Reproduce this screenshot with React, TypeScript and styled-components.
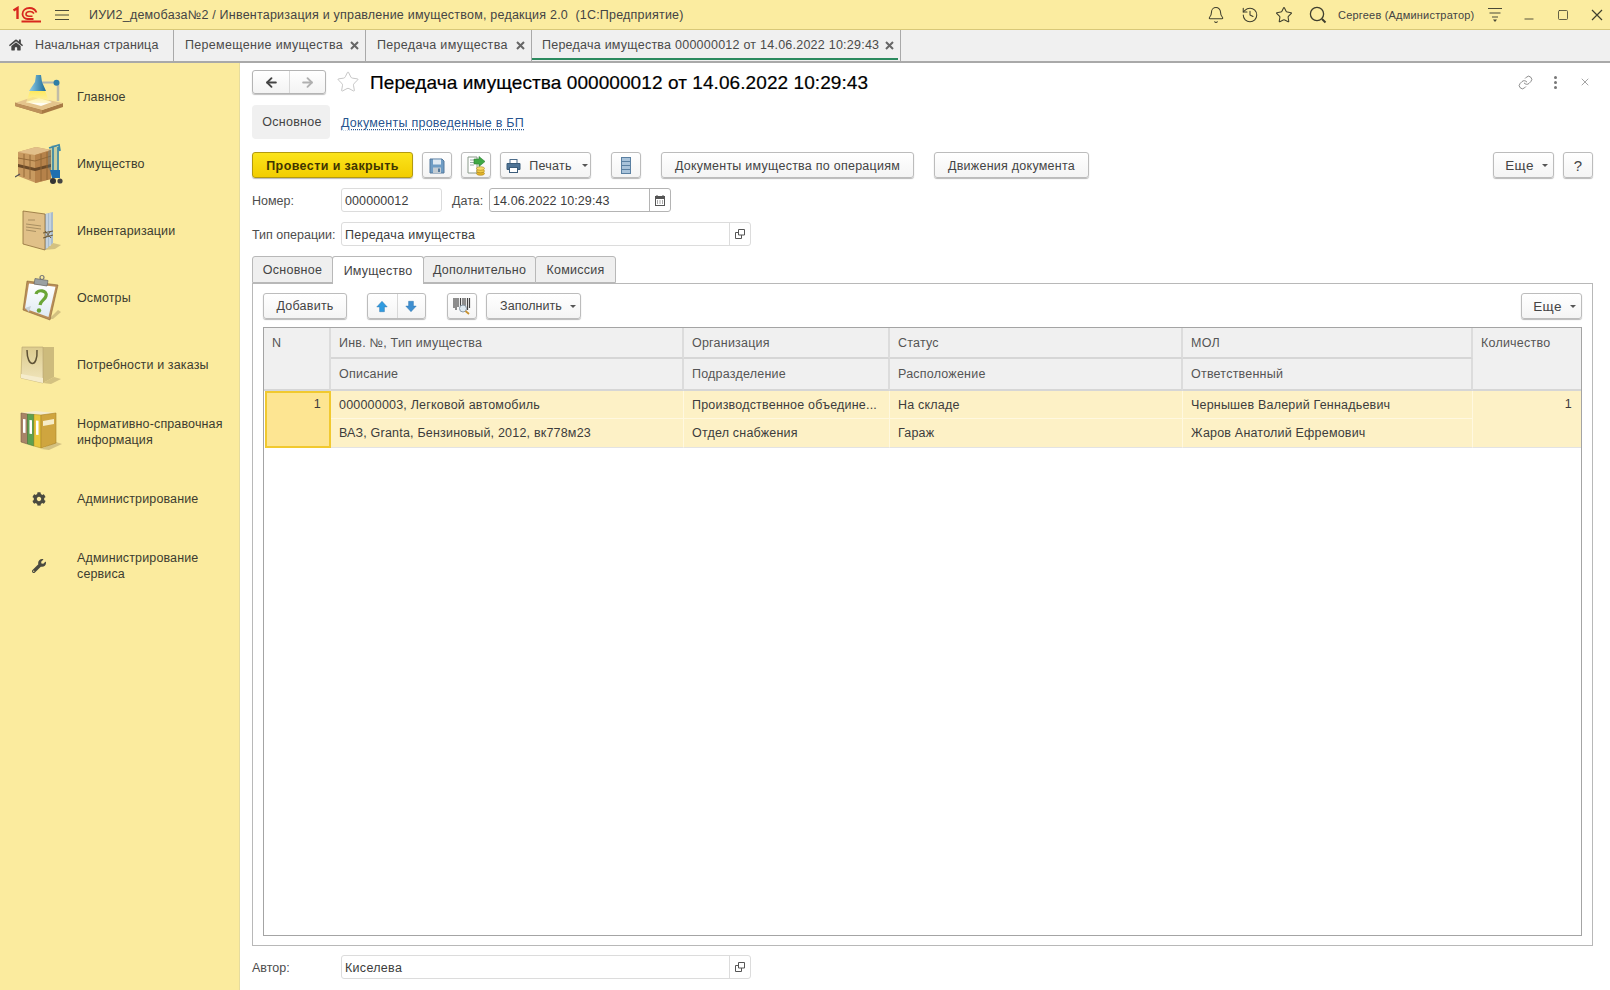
import styled, { createGlobalStyle } from 'styled-components';
import { ReactNode } from 'react';
import { Bell, History, Star, Minus, Square, X, Link, ArrowLeft, ArrowRight } from 'lucide-react';
import { FaHome, FaCog, FaWrench } from 'react-icons/fa';

const GlobalStyle = createGlobalStyle`
  html, body { margin: 0; padding: 0; height: 100%; overflow: hidden; background: #fff; }
  body { font-family: "Liberation Sans", Arial, sans-serif; font-size: 13px; color: #3c3c3c; }
  * { box-sizing: border-box; }
`;

const Page = styled.div`
  width: 1610px;
  height: 990px;
  display: flex;
  flex-direction: column;
  overflow: hidden;
`;

/* ---------- title bar ---------- */
const TitleBar = styled.header`
  height: 30px;
  flex: none;
  display: flex;
  align-items: center;
  background: #fbeca0;
  border-bottom: 1px solid #d8c878;
`;

const LogoBox = styled.div`
  width: 45px;
  padding-left: 12px;
  display: flex;
  align-items: center;
`;

const Burger = styled.div`
  width: 34px;
  display: flex;
  justify-content: center;
`;

const AppTitle = styled.div`
  flex: 1;
  padding-left: 10px;
  font-size: 12.5px;
  color: #444;
  letter-spacing: 0.215px;
  white-space: pre;
`;

const BarIcon = styled.div`
  width: 34px;
  height: 29px;
  display: flex;
  align-items: center;
  justify-content: center;
  color: #3f3f2e;
`;

const CloseWin = styled(BarIcon)`
  width: 26px;
  margin-left: 4px;
`;

const UserName = styled.div`
  font-size: 11px;
  color: #444;
  width: 143px;
  padding-left: 3px;
  letter-spacing: 0.2px;
  white-space: nowrap;
`;

/* ---------- open windows ---------- */
const TabStrip = styled.nav`
  height: 33px;
  flex: none;
  display: flex;
  background: #f0f0f0;
  border-bottom: 2px solid #a9a9a9;
`;

const WinTab = styled.div<{ $width: number; $active?: boolean }>`
  width: ${(p) => p.$width}px;
  flex: none;
  display: flex;
  align-items: center;
  justify-content: space-between;
  padding: 0 6px 1px 11px;
  border-right: 1px solid #a9a9a9;
  font-size: 12.5px;
  letter-spacing: 0.32px;
  color: #4a4a4a;
  white-space: nowrap;
  position: relative;
  ${(p) =>
    p.$active &&
    `
    padding-left: 10px;
    padding-right: 6px;
    letter-spacing: 0.24px;
    &::after {
      content: '';
      position: absolute;
      left: 0;
      right: 2px;
      bottom: 1px;
      height: 2px;
      background: #2b8a5e;
    }
  `}
`;

const HomeTab = styled(WinTab)`
  justify-content: flex-start;
  gap: 12px;
  padding-left: 9px;
  letter-spacing: 0.14px;
`;

const TabClose = () => (
  <svg width="9" height="9" viewBox="0 0 9 9">
    <path d="M1 1l7 7M8 1l-7 7" stroke="#666" strokeWidth="2" />
  </svg>
);

/* ---------- body ---------- */
const Body = styled.div`
  flex: 1;
  min-height: 0;
  display: flex;
`;

const Sidebar = styled.aside`
  width: 240px;
  flex: none;
  background: #fbeb9e;
  border-right: 1px solid #e6dc9e;
`;

const NavItem = styled.div`
  height: 67px;
  display: grid;
  grid-template-columns: 77px 1fr;
  align-items: center;
  font-size: 12.5px;
  line-height: 16px;
  letter-spacing: 0.13px;
  color: #3c3c30;
`;

const NavIcon = styled.div`
  display: flex;
  justify-content: center;
  padding-left: 1px;
  color: #4a4a40;
`;

const Content = styled.main`
  flex: 1;
  min-width: 0;
  display: flex;
  flex-direction: column;
  padding: 7px 17px 0 12px;
`;

const DocHeader = styled.div`
  height: 24px;
  display: flex;
  align-items: center;
`;

const NavGroup = styled.div`
  width: 74px;
  height: 24px;
  display: grid;
  grid-template-columns: 1fr 1fr;
  border: 1px solid #b4b4b4;
  border-radius: 3px;
  background: linear-gradient(#fff, #f3f3f3);
  box-shadow: 0 1px 1px rgba(0, 0, 0, 0.25);
  & > div {
    display: flex;
    align-items: center;
    justify-content: center;
  }
  & > div + div {
    border-left: 1px solid #d8d8d8;
  }
`;

const DocTitle = styled.h1`
  margin: 1px 0 0 10px;
  flex: 1;
  font-size: 19px;
  font-weight: 400;
  color: #000;
  letter-spacing: 0.08px;
  white-space: nowrap;
  -webkit-text-stroke: 0.2px #000;
`;

const HeaderTools = styled.div`
  display: flex;
  align-items: center;
  margin-right: -7px;
`;

const HeaderTool = styled.div`
  width: 30px;
  display: flex;
  justify-content: center;
  color: #666;
`;

const Dots = styled.div`
  display: flex;
  flex-direction: column;
  gap: 2px;
  & > i {
    width: 3px;
    height: 3px;
    border-radius: 50%;
    background: #777;
  }
`;

const SectionTabs = styled.div`
  margin-top: 11px;
  height: 34px;
  display: flex;
  align-items: center;
`;

const SectionCurrent = styled.div`
  width: 78px;
  height: 34px;
  padding-left: 2px;
  line-height: 35px;
  text-align: center;
  background: #f0f0f0;
  border-radius: 4px;
  letter-spacing: 0.3px;
  font-size: 12.5px;
  color: #444;
`;

const SectionLink = styled.a`
  margin: 1px 0 0 11px;
  color: #27548f;
  font-size: 12.5px;
  letter-spacing: 0.25px;
  text-decoration: underline;
  text-decoration-style: dotted;
  text-underline-offset: 2px;
`;

const CommandBar = styled.div<{ $top?: number }>`
  margin-top: ${(p) => p.$top ?? 13}px;
  height: 26px;
  display: flex;
  align-items: stretch;
`;

const PanelBar = styled(CommandBar)`
  & > div {
    padding-top: 0;
  }
`;

const Spring = styled.div`
  flex: 1;
`;

const Btn = styled.div<{ $width: number; $left?: number; $primary?: boolean; $gap?: number }>`
  width: ${(p) => p.$width}px;
  margin-left: ${(p) => p.$left ?? 0}px;
  flex: none;
  display: flex;
  align-items: center;
  justify-content: center;
  gap: ${(p) => p.$gap ?? 6}px;
  padding-top: 1px;
  border: 1px solid ${(p) => (p.$primary ? '#b39a10' : '#bcbcbc')};
  border-radius: 3px;
  background: ${(p) => (p.$primary ? 'linear-gradient(#fbe41c, #f2cd00)' : 'linear-gradient(#fff, #f4f4f4)')};
  box-shadow: 0 1px 1px rgba(0, 0, 0, 0.28);
  font-size: 12.5px;
  letter-spacing: ${(p) => (p.$primary ? 0.4 : 0.25)}px;
  font-weight: ${(p) => (p.$primary ? 700 : 400)};
  color: ${(p) => (p.$primary ? '#3f3500' : '#444')};
  white-space: nowrap;
`;

const PrintBtn = styled(Btn)`
  padding-left: 3px;
`;

const MoreBtn = styled(Btn)`
  padding-left: 6px;
  font-size: 13.5px;
  letter-spacing: 0.4px;
`;

const FillBtn = styled(Btn)`
  padding-left: 9px;
  letter-spacing: 0.05px;
`;

const HelpBtn = styled(Btn)`
  font-size: 15px;
  padding-top: 0;
`;

const Caret = styled.i`
  width: 0;
  height: 0;
  margin-left: 2px;
  border-left: 3px solid transparent;
  border-right: 3px solid transparent;
  border-top: 3px solid #555;
`;

const SplitBtn = styled(Btn)`
  display: grid;
  grid-template-columns: 1fr 1fr;
  gap: 0;
  & > div {
    display: flex;
    align-items: center;
    justify-content: center;
    height: 100%;
  }
  & > div + div {
    border-left: 1px solid #d8d8d8;
  }
`;

const FieldRow = styled.div<{ $top: number }>`
  margin-top: ${(p) => p.$top}px;
  height: 24px;
  display: flex;
  align-items: center;
`;

const Label = styled.label<{ $width?: number; $left?: number }>`
  width: ${(p) => p.$width ?? 89}px;
  margin-left: ${(p) => p.$left ?? 0}px;
  padding-top: 1px;
  flex: none;
  font-size: 12.5px;
  color: #4d4d4d;
  white-space: nowrap;
`;

const Field = styled.div<{ $width: number; $strong?: boolean }>`
  width: ${(p) => p.$width}px;
  height: 24px;
  flex: none;
  display: flex;
  align-items: center;
  border: 1px solid ${(p) => (p.$strong ? '#b4b4b4' : '#dcdcdc')};
  border-radius: 3px;
  background: #fff;
  font-size: 12.5px;
  color: #3c3c3c;
`;

const FieldValue = styled.span<{ $digits?: boolean }>`
  flex: 1;
  padding: 1px 0 0 3px;
  letter-spacing: ${(p) => (p.$digits ? 0.1 : 0.3)}px;
`;

const FieldBtn = styled.span<{ $strong?: boolean }>`
  width: 21px;
  height: 100%;
  display: flex;
  align-items: center;
  justify-content: center;
  border-left: 1px solid ${(p) => (p.$strong ? '#b4b4b4' : '#dcdcdc')};
`;

const PageTabs = styled.div`
  margin-top: 10px;
  height: 27px;
  display: flex;
`;

const PageTab = styled.div<{ $width: number; $active?: boolean }>`
  width: ${(p) => p.$width}px;
  height: ${(p) => (p.$active ? 28 : 27)}px;
  display: flex;
  align-items: center;
  justify-content: center;
  position: relative;
  z-index: ${(p) => (p.$active ? 1 : 0)};
  margin-right: -1px;
  border: 1px solid #b8b8b8;
  border-bottom: ${(p) => (p.$active ? 'none' : '1px solid #b8b8b8')};
  border-radius: 3px 3px 0 0;
  background: ${(p) => (p.$active ? '#fff' : '#efefef')};
  font-size: 12.5px;
  letter-spacing: 0.25px;
  color: #444;
`;

const Panel = styled.section`
  height: 663px;
  display: flex;
  flex-direction: column;
  border: 1px solid #b8b8b8;
  padding: 0 10px;
`;

const Grid = styled.div`
  margin-top: 8px;
  height: 609px;
  border: 1px solid #a4a4a4;
  display: grid;
  grid-template-columns: 67px 353px 206px 293px 290px 1fr;
  grid-template-rows: 31px 32px 28px 29px 1fr;
  align-content: start;
`;

const HeadCell = styled.div<{ $tall?: boolean; $last?: boolean }>`
  grid-row: ${(p) => (p.$tall ? 'span 2' : 'auto')};
  padding: ${(p) => (p.$tall ? '8px' : '0')} 9px 0 8px;
  display: flex;
  align-items: ${(p) => (p.$tall ? 'flex-start' : 'center')};
  background: #f0f0f0;
  border-right: ${(p) => (p.$last ? 'none' : '2px solid #dcdcdc')};
  border-bottom: 2px solid #d6d6d6;
  font-size: 12.5px;
  letter-spacing: 0.22px;
  color: #555;
  white-space: nowrap;
`;

const RowCell = styled.div<{ $tall?: boolean; $last?: boolean; $bottom?: boolean; $right?: boolean }>`
  grid-row: ${(p) => (p.$tall ? 'span 2' : 'auto')};
  padding: ${(p) => (p.$tall ? '6px' : '0')} 9px 0 8px;
  display: flex;
  align-items: ${(p) => (p.$tall ? 'flex-start' : 'center')};
  justify-content: ${(p) => (p.$right ? 'flex-end' : 'flex-start')};
  background: #fdf1c6;
  border-right: ${(p) => (p.$last ? 'none' : '1px solid #fff8e0')};
  border-bottom: 1px solid ${(p) => (p.$bottom || p.$tall ? '#e3e3e3' : '#fff8e0')};
  font-size: 12.5px;
  letter-spacing: 0.2px;
  color: #3c3c3c;
  white-space: nowrap;
  overflow: hidden;
`;

const ActiveCell = styled(RowCell)`
  background: #fde592;
  border: 2px solid #f1c92f;
  padding: 4px 8px 0;
  margin-left: 1px;
`;

const Empty = styled.div`
  grid-column: 1 / -1;
  background: #fff;
`;

/* ---------- icons ---------- */
const Logo = () => (
  <svg width="30" height="17" viewBox="0 0 29 17" fill="none" stroke="#d8281e">
    <path d="M1 4.5 L5 2 V13" strokeWidth="2.4" />
    <path d="M24 6.5 C22.5 3 19.5 2 17 2 C13 2 10 4.5 10 8 C10 11 12.5 13 15 13 H21" strokeWidth="1.8" />
    <path d="M21.5 7.5 C20.5 6 19 5.5 17.5 5.5 C15 5.5 13.5 6.8 13.5 8.3 C13.5 9.5 15 10.2 16.5 10.2 H20" strokeWidth="1.6" />
    <path d="M9 15.5 H28.5" strokeWidth="2" />
  </svg>
);

const BurgerIcon = () => (
  <svg width="14" height="12" viewBox="0 0 14 12" stroke="#4a4a38" strokeWidth="1.2">
    <path d="M0 1.5H14M0 6H14M0 10.5H14" />
  </svg>
);

const SearchIcon = () => (
  <svg width="18" height="18" viewBox="0 0 18 18" fill="none" stroke="#3f3f2e" strokeWidth="1.3">
    <circle cx="8" cy="8" r="6.6" />
    <path d="M13 13L16.5 16.5" strokeWidth="2" />
  </svg>
);

const FilterIcon = () => (
  <svg width="16" height="15" viewBox="0 0 16 15" stroke="#4a4a38" strokeWidth="1.2">
    <path d="M1 1.5H15M2.5 6H13.5M5 10H11" />
    <path d="M6 12.5H10L8 15Z" fill="#4a4a38" stroke="none" />
  </svg>
);

const WinCloseIcon = () => (
  <svg width="12" height="12" viewBox="0 0 12 12" stroke="#3f3f2e" strokeWidth="1.2">
    <path d="M1 1L11 11M11 1L1 11" />
  </svg>
);

const OpenIcon = () => (
  <svg width="10" height="10" viewBox="0 0 10 10" fill="none" stroke="#555">
    <path d="M3.5 0.5H9.5V6H3.5Z" />
    <path d="M3.5 3.5H0.5V9.5H6.5V6" />
  </svg>
);

const CalendarIcon = () => (
  <svg width="10" height="11" viewBox="0 0 10 11">
    <rect x="0.5" y="1.5" width="9" height="9" fill="#fff" stroke="#555" />
    <rect x="0.5" y="1.5" width="9" height="2.5" fill="#555" />
    <path d="M2 0V2M8 0V2" stroke="#555" />
    <path d="M2 6H3M4.5 6H5.5M7 6H8M2 8H3M4.5 8H5.5M7 8H8" stroke="#555" />
  </svg>
);

const SaveIcon = () => (
  <svg width="16" height="16" viewBox="0 0 16 16">
    <path d="M1 1H13L15 3V15H1Z" fill="#6e9cc4" stroke="#55799c" />
    <rect x="4" y="1.5" width="8" height="5" fill="#dfe9f2" />
    <rect x="4" y="9.5" width="8" height="5.5" fill="#c3ccd3" />
    <rect x="9" y="10.5" width="2" height="3.5" fill="#55799c" />
  </svg>
);

const PostIcon = () => (
  <svg width="20" height="20" viewBox="0 0 20 20">
    <path d="M2 1H11V17H2Z" fill="#fff" stroke="#8a9a8a" />
    <path d="M4 4H9M4 6.5H9M4 9H8" stroke="#9aa" />
    <path d="M8 3H13V0.5L19 5.5 13 10.5V8H8Z" fill="#3fa945" stroke="#2b7c31" strokeWidth="0.6" />
    <ellipse cx="14.5" cy="17.5" rx="4" ry="1.8" fill="#e3b52c" stroke="#a97f13" strokeWidth="0.6" />
    <ellipse cx="14.5" cy="15" rx="4" ry="1.8" fill="#f0cb48" stroke="#a97f13" strokeWidth="0.6" />
    <ellipse cx="14.5" cy="12.5" rx="4" ry="1.8" fill="#f7dc6b" stroke="#a97f13" strokeWidth="0.6" />
  </svg>
);

const PrintIcon = () => (
  <svg width="15" height="14" viewBox="0 0 15 14">
    <rect x="4" y="0.5" width="7" height="4" fill="#fff" stroke="#4d6d8b" />
    <path d="M1 4.5H14V10.5H1Z" fill="#4f7496" stroke="#3b5c7a" />
    <rect x="3.5" y="8.5" width="8" height="5" fill="#fff" stroke="#3b5c7a" />
  </svg>
);

const ListIcon = () => (
  <svg width="10" height="17" viewBox="0 0 10 17">
    <rect x="0.5" y="0.5" width="9" height="16" fill="#a9c3da" stroke="#5a80a2" />
    <path d="M0.5 4.5H9.5M0.5 8.5H9.5M0.5 12.5H9.5" stroke="#5a80a2" />
  </svg>
);

const BlueArrow = ({ down }: { down?: boolean }) => (
  <svg width="12" height="13" viewBox="0 0 15 15" style={down ? { transform: 'scaleY(-1)' } : undefined}>
    <path d="M7.5 1 L14 8 H10.5 V14 H4.5 V8 H1 Z" fill={down ? '#3f8fd0' : '#2f9be0'} stroke="#2a74ae" strokeWidth="0.6" />
  </svg>
);

const BarcodeIcon = () => (
  <svg width="18" height="18" viewBox="0 0 18 18">
    <path d="M1 1V11M3 1V13M5 1V10M7.5 1V9M10 1V9M12 1V10M14.5 1V13M16.5 1V11" stroke="#444" strokeWidth="1.2" />
    <circle cx="10" cy="11.5" r="3.5" fill="#dfeaf2" stroke="#8a9aa6" />
    <path d="M12.5 14L16 17" stroke="#c8912e" strokeWidth="1.8" />
  </svg>
);

const LampIcon = () => (
  <svg width="48" height="48" viewBox="0 0 48 48">
    <defs>
      <linearGradient id="lampCone" x1="0" y1="0" x2="0" y2="1">
        <stop offset="0" stopColor="#ffe95a" />
        <stop offset="1" stopColor="#fff2a8" stopOpacity="0.5" />
      </linearGradient>
      <linearGradient id="lampShade" x1="0" y1="0" x2="1" y2="0">
        <stop offset="0" stopColor="#8fcde8" />
        <stop offset="1" stopColor="#1c6a96" />
      </linearGradient>
    </defs>
    <path d="M0 33 L27 41 L48 34 V30 L27 37 L0 29.5Z" fill="#a87a45" />
    <path d="M0 30 L18 24 L48 30 L27 37Z" fill="#e4c48c" />
    <path d="M0 33 L27 41 L27 37 L0 30Z" fill="#bd915b" />
    <path d="M11 29 L24 25 L37 29 L26 33Z" fill="#fffdf2" />
    <path d="M15 18 H30 L35 30 H11Z" fill="url(#lampCone)" />
    <path d="M43 10 V28" stroke="#c0bca8" strokeWidth="2.5" />
    <path d="M26 9.5 H41" stroke="#aeb5b0" strokeWidth="2" />
    <circle cx="41.5" cy="9.7" r="3" fill="#2f7ea6" />
    <path d="M21 2 H26 L27 9 L31 18 L14 18 L20 9Z" fill="url(#lampShade)" />
  </svg>
);

const CratesIcon = () => (
  <svg width="48" height="48" viewBox="0 0 48 48">
    <path d="M3 12 L21 7 L36 10 L36 39 L21 43 L3 36Z" fill="#c89a60" />
    <path d="M3 12 L21 7 L36 10 L20 15Z" fill="#e2bf8a" />
    <path d="M20 15 L36 10 V39 L20 43Z" fill="#b6824a" />
    <path d="M3 24 L20 28 L36 24 V27 L20 31 L3 27Z" fill="#6a4a28" />
    <path d="M9 14 V37 M15 15 V39 M26 14 V41 M32 12 V40 M3 18 L20 21 L36 16" stroke="#8f6534" strokeWidth="0.9" fill="none" />
    <path d="M33 12 V28 L39 36 H44 L42 26 V5 H37 Z" fill="#2c78a8" opacity="0.25" />
    <path d="M34 8 L44 5 L45 11 M38 7 V30 M43 7 V31" stroke="#3f8aa6" strokeWidth="1.8" fill="none" />
    <path d="M35 30 H45 L45 38 H37 Z" fill="#1e6fb0" />
    <circle cx="38" cy="41" r="3" fill="#333" />
    <circle cx="45" cy="41" r="2.6" fill="#444" />
    <path d="M0 37 L5 34" stroke="#555" strokeWidth="1.4" />
  </svg>
);

const FolderIcon = () => (
  <svg width="48" height="48" viewBox="0 0 48 48">
    <path d="M28 43 L38 36 L46 38 L40 42Z" fill="#c9b779" opacity="0.8" />
    <path d="M30 7 L38 5 V36 L30 43Z" fill="#a9bccd" />
    <path d="M32 6.5 V41 M35 6 V39" stroke="#dfe8ef" />
    <path d="M8 4 L30 7 V43 L8 37Z" fill="#e0c088" stroke="#8e6d3a" strokeWidth="0.8" />
    <path d="M13 13 H20 M11 17 L26 19 M11 20 L26 22 M11 23 L21 24.5" stroke="#8f7a50" strokeWidth="0.7" />
    <path d="M28 26 L38 24 M28 31 L38 28 M30 24 L36 31 M36 24 L30 31" stroke="#6d5a38" strokeWidth="1" />
  </svg>
);

const ClipboardIcon = () => (
  <svg width="48" height="48" viewBox="0 0 48 48">
    <path d="M34 45 L43 36 L46 38 L38 45Z" fill="#c9b779" opacity="0.8" />
    <defs>
      <linearGradient id="clipPaper" x1="0" y1="0" x2="0" y2="1">
        <stop offset="0" stopColor="#ffffff" />
        <stop offset="1" stopColor="#dfeaf3" />
      </linearGradient>
    </defs>
    <path d="M12 7 L43 11 L35 46 L8 36Z" fill="#b98d58" stroke="#8a6436" strokeWidth="0.6" />
    <path d="M14 9.5 L40.5 12.8 L33.5 43 L14 36 L10 34Z" fill="url(#clipPaper)" />
    <path d="M10 34 L14 38 L16 32Z" fill="#c7d0d6" />
    <path d="M20 4.5 L33 6.5 L32 12 L19 10Z" fill="#9aa0a2" stroke="#666" strokeWidth="0.7" />
    <circle cx="27" cy="3.5" r="2" fill="none" stroke="#777" strokeWidth="1.2" />
    <path d="M21 20 C22 15 33 16 31 22 C30 26 26 26 25 31" fill="none" stroke="#6aa536" strokeWidth="3.2" />
    <circle cx="24" cy="36.5" r="2.2" fill="#6aa536" />
  </svg>
);

const BagIcon = () => (
  <svg width="48" height="48" viewBox="0 0 48 48">
    <defs>
      <linearGradient id="bagFront" x1="0" y1="0" x2="0" y2="1">
        <stop offset="0" stopColor="#dccb8e" />
        <stop offset="1" stopColor="#f1e6bd" />
      </linearGradient>
    </defs>
    <path d="M28 42 L39 36 L46 38 L36 43Z" fill="#c9b779" opacity="0.8" />
    <path d="M28 6 L39 6 V36 L28 42Z" fill="#cdbb7c" />
    <path d="M7 6 H28 V42 L6 37Z" fill="url(#bagFront)" stroke="#b6a370" strokeWidth="0.6" />
    <path d="M6 33 L28 37 V42 L6 37Z" fill="#f5eccc" />
    <path d="M12 9 C12 27 23 27 22 9" fill="none" stroke="#5e5236" strokeWidth="1.5" />
  </svg>
);

const BindersIcon = () => (
  <svg width="48" height="48" viewBox="0 0 48 48">
    <path d="M26 41 L41 34 L47 36 L34 42Z" fill="#c9b779" opacity="0.8" />
    <path d="M6 5 L20 3 L41 5 L26 7Z" fill="#f4eccf" />
    <path d="M6 5 L12.5 6 V36 L6 34Z" fill="#a88468" stroke="#7b5c44" strokeWidth="0.6" />
    <path d="M12.5 6 L19 6.5 V38 L12.5 36Z" fill="#5fa04f" stroke="#44773a" strokeWidth="0.6" />
    <path d="M19 6.5 L26 7 V40 L19 38Z" fill="#e8c63c" stroke="#b8962a" strokeWidth="0.6" />
    <path d="M26 7 L41 5 V35 L26 40Z" fill="#cfa53f" stroke="#a98328" strokeWidth="0.6" />
    <path d="M28 13 L39 11 V16 L28 18Z" fill="#f6ecc7" />
    <path d="M8 11 L10.5 11.3 V25 L8 24.7Z M14.5 12 L17 12.3 V26 L14.5 25.7Z M21 12.5 L23.5 12.8 V27 L21 26.7Z" fill="#fff" />
  </svg>
);

const navItems: { title: ReactNode; icon: ReactNode }[] = [
  { title: 'Главное', icon: <LampIcon /> },
  { title: 'Имущество', icon: <CratesIcon /> },
  { title: 'Инвентаризации', icon: <FolderIcon /> },
  { title: 'Осмотры', icon: <ClipboardIcon /> },
  { title: 'Потребности и заказы', icon: <BagIcon /> },
  { title: <>Нормативно-справочная<br />информация</>, icon: <BindersIcon /> },
  { title: 'Администрирование', icon: <FaCog size={14} /> },
  { title: <>Администрирование<br />сервиса</>, icon: <FaWrench size={14} /> },
];

export default function App() {
  return (
    <Page>
      <GlobalStyle />
      <TitleBar>
        <LogoBox><Logo /></LogoBox>
        <Burger><BurgerIcon /></Burger>
        <AppTitle>ИУИ2_демобаза№2 / Инвентаризация и управление имуществом, редакция 2.0  (1С:Предприятие)</AppTitle>
        <BarIcon><Bell size={18} strokeWidth={1.4} /></BarIcon>
        <BarIcon><History size={18} strokeWidth={1.4} /></BarIcon>
        <BarIcon><Star size={18} strokeWidth={1.4} /></BarIcon>
        <BarIcon><SearchIcon /></BarIcon>
        <UserName>Сергеев (Администратор)</UserName>
        <BarIcon><FilterIcon /></BarIcon>
        <BarIcon><Minus size={14} strokeWidth={1.5} style={{ marginTop: 8 }} /></BarIcon>
        <BarIcon><Square size={12} strokeWidth={1.6} /></BarIcon>
        <CloseWin><WinCloseIcon /></CloseWin>
      </TitleBar>

      <TabStrip>
        <HomeTab $width={174}><FaHome size={14} color="#444" />Начальная страница</HomeTab>
        <WinTab $width={192}>Перемещение имущества<TabClose /></WinTab>
        <WinTab $width={166}>Передача имущества<TabClose /></WinTab>
        <WinTab $width={369} $active>Передача имущества 000000012 от 14.06.2022 10:29:43<TabClose /></WinTab>
      </TabStrip>

      <Body>
        <Sidebar>
          {navItems.map((item, i) => (
            <NavItem key={i}>
              <NavIcon>{item.icon}</NavIcon>
              <span>{item.title}</span>
            </NavItem>
          ))}
        </Sidebar>

        <Content>
          <DocHeader>
            <NavGroup>
              <div><ArrowLeft size={15} strokeWidth={3} color="#444" /></div>
              <div><ArrowRight size={15} strokeWidth={3} color="#b0b0b0" /></div>
            </NavGroup>
            <Star size={24} strokeWidth={0.8} color="#b8b8b8" style={{ marginLeft: 10 }} />
            <DocTitle>Передача имущества 000000012 от 14.06.2022 10:29:43</DocTitle>
            <HeaderTools>
              <HeaderTool><Link size={15} strokeWidth={1.2} /></HeaderTool>
              <HeaderTool><Dots><i /><i /><i /></Dots></HeaderTool>
              <HeaderTool><X size={12} strokeWidth={1.2} /></HeaderTool>
            </HeaderTools>
          </DocHeader>

          <SectionTabs>
            <SectionCurrent>Основное</SectionCurrent>
            <SectionLink>Документы проведенные в БП</SectionLink>
          </SectionTabs>

          <CommandBar>
            <Btn $width={161} $primary>Провести и закрыть</Btn>
            <Btn $width={30} $left={9}><SaveIcon /></Btn>
            <Btn $width={30} $left={9}><PostIcon /></Btn>
            <PrintBtn $width={91} $left={9} $gap={8}><PrintIcon />Печать<Caret /></PrintBtn>
            <Btn $width={30} $left={20}><ListIcon /></Btn>
            <Btn $width={253} $left={20}>Документы имущества по операциям</Btn>
            <Btn $width={155} $left={20}>Движения документа</Btn>
            <Spring />
            <MoreBtn $width={61}>Еще<Caret /></MoreBtn>
            <HelpBtn $width={30} $left={9}>?</HelpBtn>
          </CommandBar>

          <FieldRow $top={10}>
            <Label>Номер:</Label>
            <Field $width={101}><FieldValue $digits>000000012</FieldValue></Field>
            <Label $width={37} $left={10}>Дата:</Label>
            <Field $width={182} $strong>
              <FieldValue $digits>14.06.2022 10:29:43</FieldValue>
              <FieldBtn $strong><CalendarIcon /></FieldBtn>
            </Field>
          </FieldRow>

          <FieldRow $top={10}>
            <Label>Тип операции:</Label>
            <Field $width={410}>
              <FieldValue>Передача имущества</FieldValue>
              <FieldBtn><OpenIcon /></FieldBtn>
            </Field>
          </FieldRow>

          <PageTabs>
            <PageTab $width={81}>Основное</PageTab>
            <PageTab $width={92} $active>Имущество</PageTab>
            <PageTab $width={113}>Дополнительно</PageTab>
            <PageTab $width={81}>Комиссия</PageTab>
          </PageTabs>

          <Panel>
            <PanelBar $top={9}>
              <Btn $width={84}>Добавить</Btn>
              <SplitBtn $width={59} $left={20}>
                <div><BlueArrow /></div>
                <div><BlueArrow down /></div>
              </SplitBtn>
              <Btn $width={30} $left={21}><BarcodeIcon /></Btn>
              <FillBtn $width={95} $left={9}>Заполнить<Caret /></FillBtn>
              <Spring />
              <MoreBtn $width={61}>Еще<Caret /></MoreBtn>
            </PanelBar>

            <Grid>
              <HeadCell $tall>N</HeadCell>
              <HeadCell>Инв. №, Тип имущества</HeadCell>
              <HeadCell>Организация</HeadCell>
              <HeadCell>Статус</HeadCell>
              <HeadCell>МОЛ</HeadCell>
              <HeadCell $tall $last>Количество</HeadCell>
              <HeadCell>Описание</HeadCell>
              <HeadCell>Подразделение</HeadCell>
              <HeadCell>Расположение</HeadCell>
              <HeadCell>Ответственный</HeadCell>

              <ActiveCell $tall $right>1</ActiveCell>
              <RowCell>000000003, Легковой автомобиль</RowCell>
              <RowCell>Производственное объедине...</RowCell>
              <RowCell>На складе</RowCell>
              <RowCell>Чернышев Валерий Геннадьевич</RowCell>
              <RowCell $tall $last $right>1</RowCell>
              <RowCell $bottom>ВАЗ, Granta, Бензиновый, 2012, вк778м23</RowCell>
              <RowCell $bottom>Отдел снабжения</RowCell>
              <RowCell $bottom>Гараж</RowCell>
              <RowCell $bottom>Жаров Анатолий Ефремович</RowCell>
              <Empty />
            </Grid>
          </Panel>

          <FieldRow $top={9}>
            <Label>Автор:</Label>
            <Field $width={410}>
              <FieldValue>Киселева</FieldValue>
              <FieldBtn><OpenIcon /></FieldBtn>
            </Field>
          </FieldRow>
        </Content>
      </Body>
    </Page>
  );
}
